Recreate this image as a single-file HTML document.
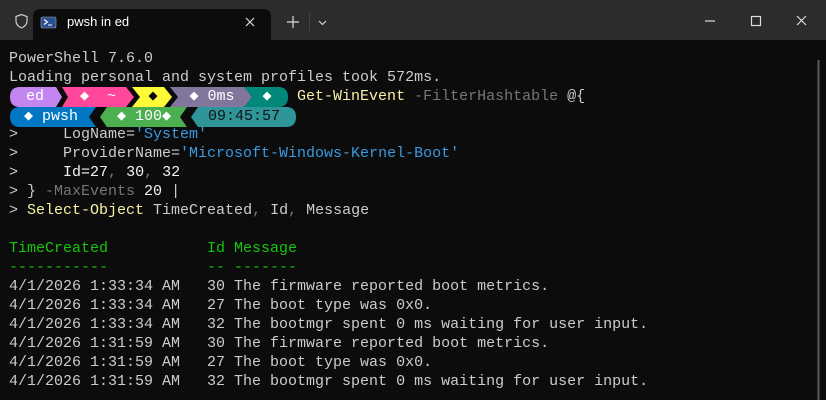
<!DOCTYPE html><html><head><style>
body{margin:0;width:826px;height:400px;overflow:hidden;background:#0c0c0c;font-family:"Liberation Sans",sans-serif}
.tb{position:absolute;left:0;top:0;width:826px;height:40px;background:#2c2c2c}
.tab{position:absolute;left:33px;top:9px;width:238px;height:31px;background:#0c0c0c;border-radius:7px 7px 0 0}
.t{position:absolute;left:9px;top:49px;font-family:"Liberation Mono",monospace;font-size:15px;line-height:19px;color:#cccccc;white-space:pre}
.seg{position:absolute;height:19px;line-height:19px;font-family:"Liberation Mono",monospace;font-size:15px;white-space:pre;text-align:center}
.y{color:#f9f1a5}.g{color:#767676}.b{color:#3b9ae0}.w{color:#f2f2f2}.gr{color:#16c60c}
</style></head><body>
<div class="tb"></div>
<div class="tab"></div>
<svg style="position:absolute;left:0;top:0" width="826" height="400">
<path d="M16 16.5 L21.5 14.5 L27 16.5 V21 Q27 25.5 21.5 28 Q16 25.5 16 21 Z" fill="none" stroke="#ccc" stroke-width="1.2"/>
<rect x="41" y="17" width="15" height="11" rx="1.5" fill="#2a4f8f" stroke="#9ab" stroke-width=".6"/>
<path d="M44 19.5 L47.5 22 L44 24.5 M48 25 H52" stroke="#fff" stroke-width="1.1" fill="none"/>
<path d="M246 18 L254 26 M254 18 L246 26" stroke="#ddd" stroke-width="1.2"/>
<path d="M293 16 V28 M287 22 H299" stroke="#ddd" stroke-width="1.2"/>
<line x1="309.5" y1="13" x2="309.5" y2="31" stroke="#444"/>
<path d="M319 21 L322.5 24.5 L326 21" stroke="#ddd" stroke-width="1.1" fill="none"/>
<path d="M705 21 H715" stroke="#ddd" stroke-width="1.2"/>
<rect x="751.5" y="16.5" width="9" height="9" fill="none" stroke="#ddd" stroke-width="1.2"/>
<path d="M797 16 L806 25 M806 16 L797 25" stroke="#ddd" stroke-width="1.2"/>
<line x1="818.5" y1="60" x2="818.5" y2="400" stroke="#5a5a5a" stroke-width="2"/>
<path d="M10 97 Q10 87 20 87 H56 L62 97 L56 107 H20 Q10 107 10 97Z" fill="#c386f1"/>
<path d="M62 87 H126 L134 97 L126 107 H62 L68 97Z" fill="#ff479c"/>
<path d="M132 87 H164 L172 97 L164 107 H132 L140 97Z" fill="#fffb38"/>
<path d="M170 87 H244 L252 97 L244 107 H170 L178 97Z" fill="#83769c"/>
<path d="M244 87 H278 Q288 87 288 97 Q288 107 278 107 H244 L252 97Z" fill="#00897b"/>
<path d="M10 117 Q10 107 20 107 H96 L89 117 L96 127 H20 Q10 127 10 117Z" fill="#0077c2"/>
<path d="M107 107 H187 L180 117 L187 127 H107 L100 117Z" fill="#4caf50"/>
<path d="M198 107 H286 Q296 107 296 117 Q296 127 286 127 H198 L191 117Z" fill="#2e9599"/>
</svg>
<div style="position:absolute;left:67px;top:14px;color:#fff;font-size:13px">pwsh in ed</div>
<div class="seg" style="left:10px;top:87px;width:50px;color:#fff">ed</div>
<div class="seg" style="left:68px;top:87px;width:60px;color:#fff">◆  ~</div>
<div class="seg" style="left:140px;top:87px;width:26px;color:#000">◆</div>
<div class="seg" style="left:178px;top:87px;width:68px;color:#fff">◆ 0ms</div>
<div class="seg" style="left:252px;top:87px;width:30px;color:#fff">◆</div>
<div class="seg" style="left:10px;top:107px;width:82px;color:#fff">◆ pwsh</div>
<div class="seg" style="left:106px;top:107px;width:76px;color:#fff">◆ 100◆</div>
<div class="seg" style="left:196px;top:107px;width:96px;color:#111">09:45:57</div>
<div class="t">PowerShell 7.6.0
Loading personal and system profiles took 572ms.
                                <span class="y">Get-WinEvent</span> <span class="g">-FilterHashtable</span> @{

&gt;     LogName=<span class="b">'System'</span>
&gt;     ProviderName=<span class="b">'Microsoft-Windows-Kernel-Boot'</span>
&gt;     <span class="w">Id=27</span><span class="g">,</span> <span class="w">30</span><span class="g">,</span> <span class="w">32</span>
&gt; } <span class="g">-MaxEvents</span> <span class="w">20</span> |
&gt; <span class="y">Select-Object</span> TimeCreated<span class="g">,</span> Id<span class="g">,</span> Message

<span class="gr">TimeCreated           Id Message
-----------           -- -------</span>
4/1/2026 1:33:34 AM   30 The firmware reported boot metrics.
4/1/2026 1:33:34 AM   27 The boot type was 0x0.
4/1/2026 1:33:34 AM   32 The bootmgr spent 0 ms waiting for user input.
4/1/2026 1:31:59 AM   30 The firmware reported boot metrics.
4/1/2026 1:31:59 AM   27 The boot type was 0x0.
4/1/2026 1:31:59 AM   32 The bootmgr spent 0 ms waiting for user input.</div>
</body></html>
